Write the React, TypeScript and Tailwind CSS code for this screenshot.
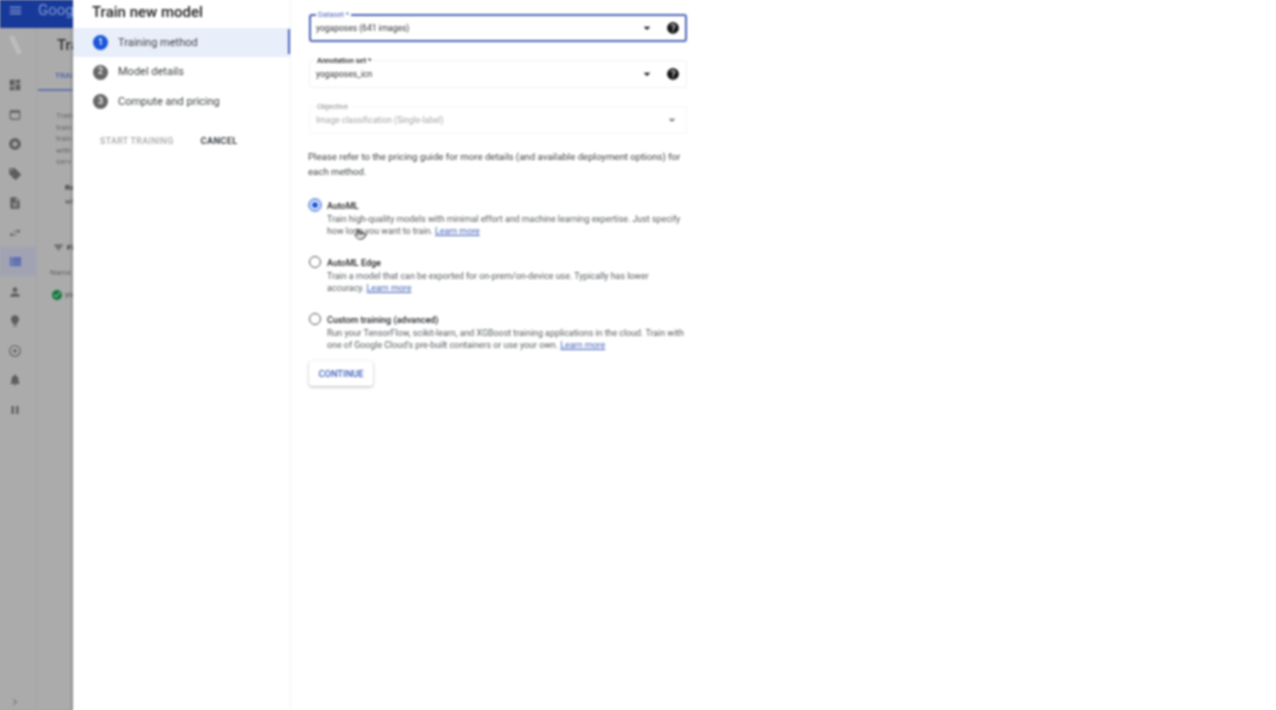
import { ChevronRight, Pointer } from "lucide-react";
import {
  MdAlbum,
  MdArrowDropDown,
  MdCheckCircle,
  MdDashboard,
  MdDescription,
  MdFilterList,
  MdHelp,
  MdLightbulb,
  MdLocalOffer,
  MdMenu,
  MdNotifications,
  MdOutlineAdjust,
  MdOutlineSwapHoriz,
  MdPause,
  MdPerson,
  MdViewList,
  MdWebAsset,
} from "react-icons/md";

const navIcons = [MdDashboard, MdWebAsset, MdAlbum, MdLocalOffer, MdDescription, MdOutlineSwapHoriz];
const navIconsBottom = [MdPerson, MdLightbulb, MdOutlineAdjust, MdNotifications, MdPause];

function Backdrop() {
  return (
    <div className="w-[73px] h-full shrink-0 overflow-hidden bg-[#ababab] flex flex-col shadow-[inset_-3px_0_3px_-2px_rgba(0,0,0,0.25)]">
      <div className="h-[28px] w-[300px] shrink-0 bg-[#17399a] flex items-center pl-[8px] pb-[7px] gap-[15px]">
        <MdMenu className="text-[#8fa3d4] text-[15px]" />
        <span className="text-[#7f99d4] text-[15px]">Google</span>
      </div>
      <div className="flex flex-1 w-[300px]">
        <div className="w-[37px] shrink-0 flex flex-col border-r border-[#a4a4a4]">
          <div className="w-[30px] h-[20px] mt-[7px] flex justify-center">
            <div className="w-[5px] h-[20px] bg-[#bdbdbd] rotate-[-25deg]" />
          </div>
          {navIcons.map((Icon, i) => (
            <div
              key={i}
              className={`h-[16px] w-[30px] ${i === 0 ? "mt-[22px]" : "mt-[13.5px]"} flex items-center justify-center`}
            >
              <Icon className="text-[#5e5e5e] text-[14px]" />
            </div>
          ))}
          <div className="mt-[6px] w-[37px] h-[29px] bg-[#a1a3b3] flex items-center">
            <div className="w-[30px] flex justify-center">
              <MdViewList className="text-[#5269b4] text-[15px]" />
            </div>
          </div>
          {navIconsBottom.map((Icon, i) => (
            <div
              key={i}
              className={`h-[16px] w-[30px] ${i === 0 ? "mt-[8px]" : "mt-[13.5px]"} flex items-center justify-center`}
            >
              <Icon className="text-[#5e5e5e] text-[14px]" />
            </div>
          ))}
          <div className="flex-1" />
          <div className="w-[30px] flex justify-center mb-[3px]">
            <ChevronRight className="text-[#444] w-[10px] h-[10px]" />
          </div>
        </div>
        <div className="flex-1 pl-[20px] text-[#4a4a4a]">
          <div className="pt-[8px] text-[15px] leading-[18px] font-medium text-[#333]">Training</div>
          <div className="mt-[17px] text-[8px] leading-[10px] font-medium text-[#4a63ab] -ml-[2px]">TRAINING</div>
          <div className="mt-[8px] h-[2px] w-[60px] -ml-[19px] bg-[#6272a8]" />
          <div className="mt-[19px] text-[8px] leading-[11.5px] text-[#6a6a6a] -ml-[1px]">
            <div>Train</div>
            <div>train</div>
            <div>train</div>
            <div>with</div>
            <div>serv</div>
          </div>
          <div className="mt-[13px] text-[8px] leading-[14.5px] ml-[8px]">
            <div className="font-bold text-[#333]">Re</div>
            <div>wh</div>
          </div>
          <div className="mt-[32px] flex items-center gap-[3px] -ml-[4px] text-[8px] font-bold text-[#333]">
            <MdFilterList className="text-[11px]" />
            Filter
          </div>
          <div className="mt-[14px] text-[8px] leading-[10px] -ml-[7px] text-[#666]">Name</div>
          <div className="mt-[11px] flex items-center gap-[2px] -ml-[6px] text-[8px]">
            <MdCheckCircle className="text-[#0f7a3a] text-[12px]" />
            yoga
          </div>
        </div>
      </div>
    </div>
  );
}

function Step({ n, label, active }: { n: number; label: string; active?: boolean }) {
  return (
    <div
      className={`h-[29px] mb-[0.5px] flex items-center pl-[20px] relative ${active ? "bg-[#e9eefb]" : ""}`}
    >
      <div
        className={`w-[15px] h-[15px] rounded-full flex items-center justify-center text-[9px] font-medium text-white ${
          active ? "bg-[#1a56d8]" : "bg-[#666666]"
        }`}
      >
        {n}
      </div>
      <span className="ml-[10px] mt-[1px] text-[11px] text-[#3c4043]">{label}</span>
      {active && <div className="absolute right-0 top-[1px] w-[2px] h-[25px] bg-[#4a68bc]" />}
    </div>
  );
}

function SelectField({
  label,
  value,
  focused,
  disabled,
}: {
  label: string;
  value: string;
  focused?: boolean;
  disabled?: boolean;
}) {
  return (
    <div
      className={`relative h-[28px] w-[378px] ml-[1px] flex items-center rounded-[3px] ${
        focused
          ? "border-2 border-[#4a63b5] pl-[5px]"
          : disabled
            ? "border border-[#f6f6f6] pl-[6px]"
            : "border border-[#f0f0f0] pl-[6px]"
      }`}
    >
      <span
        className={`absolute left-[5px] bg-white px-[2px] text-[7.5px] leading-[9px] ${
          focused
            ? "-top-[6px] text-[#4a63b5]"
            : disabled
              ? "-top-[5px] text-[#8a8a8a]"
              : "-top-[5px] text-[#202124] font-medium"
        }`}
      >
        {label}
      </span>
      <span className={`text-[8.5px] ${disabled ? "text-[#a5a5a5]" : "text-[#2a2d30]"}`}>{value}</span>
      <div className="flex-1" />
      <MdArrowDropDown className={`text-[16px] ${disabled ? "text-[#777] mr-[6px]" : "text-[#111] mr-[2px]"}`} />
      {!disabled && <MdHelp className={`text-[#111] text-[14px] ml-[9px] ${focused ? "mr-[5px]" : "mr-[6px]"}`} />}
    </div>
  );
}

function RadioOption({
  title,
  line1,
  line2,
  checked,
}: {
  title: string;
  line1: string;
  line2: string;
  checked?: boolean;
}) {
  return (
    <div className="flex h-[57px]">
      <div
        className={`w-[12px] h-[12px] mt-[1px] ml-[1px] rounded-full border-[1.5px] flex items-center justify-center ${
          checked ? "border-[#1a56d8] shadow-[0_0_0_1.5px_#c5d2f3]" : "border-[#555]"
        }`}
      >
        {checked && <div className="w-[6px] h-[6px] rounded-full bg-[#1a56d8]" />}
      </div>
      <div className="ml-[6px] mt-[1px]">
        <div className="text-[9px] leading-[15px] text-[#202124] font-medium">{title}</div>
        <div className="text-[8.87px] leading-[11px] text-[#55595e] whitespace-nowrap">{line1}</div>
        <div className="text-[8.87px] leading-[12px] text-[#55595e] whitespace-nowrap">
          {line2} <span className="text-[#3f5fb8] underline">Learn more</span>
        </div>
      </div>
    </div>
  );
}

export default function App() {
  return (
    <div className="w-[1276px] h-[710px] overflow-hidden bg-[linear-gradient(90deg,#ababab_73px,#ffffff_73px)]">
      <div className="relative w-full h-full flex overflow-hidden bg-white font-['Roboto',sans-serif] blur-[0.8px]">
        <Backdrop />
        <div className="w-[218px] shrink-0 h-full border-r border-[#f3f3f3]">
          <div className="h-[28px] pl-[19px] pt-[2px] text-[15px] leading-[20px] font-medium text-[#202124]">
            Train new model
          </div>
          <Step n={1} label="Training method" active />
          <Step n={2} label="Model details" />
          <Step n={3} label="Compute and pricing" />
          <div className="mt-[18px] pl-[27px] flex items-center font-medium tracking-[0.3px]">
            <span className="text-[8.9px] text-[#a8a8a8]">START TRAINING</span>
            <span className="ml-[27px] mb-[2px] text-[9.3px] text-[#3c4043] font-bold">CANCEL</span>
          </div>
        </div>
        <div className="flex-1 pl-[17px] pt-[14px]">
          <SelectField label="Dataset *" value="yogaposes (641 images)" focused />
          <div className="h-[18px]" />
          <SelectField label="Annotation set *" value="yogaposes_icn" />
          <div className="h-[18px]" />
          <SelectField label="Objective" value="Image classification (Single-label)" disabled />
          <p className="mt-[16px] w-[385px] text-[9.63px] leading-[14.5px] text-[#3c4043]">
            Please refer to the pricing guide for more details (and available deployment options) for
            each method.
          </p>
          <div className="mt-[19px]">
            <RadioOption
              title="AutoML"
              line1="Train high-quality models with minimal effort and machine learning expertise. Just specify"
              line2="how long you want to train."
              checked
            />
            <RadioOption
              title="AutoML Edge"
              line1="Train a model that can be exported for on-prem/on-device use. Typically has lower"
              line2="accuracy."
            />
            <RadioOption
              title="Custom training (advanced)"
              line1="Run your TensorFlow, scikit-learn, and XGBoost training applications in the cloud. Train with"
              line2="one of Google Cloud's pre-built containers or use your own."
            />
          </div>
          <button className="block -mt-[8px] ml-[1px] w-[64px] h-[25px] rounded-[3px] bg-white shadow-[0_1px_3px_rgba(0,0,0,0.3)] text-[9.3px] font-medium text-[#3a5bb8]">
            CONTINUE
          </button>
        </div>
        <Pointer className="absolute left-[354px] top-[228px] w-[12px] h-[12px] text-[#333]" />
      </div>
    </div>
  );
}
